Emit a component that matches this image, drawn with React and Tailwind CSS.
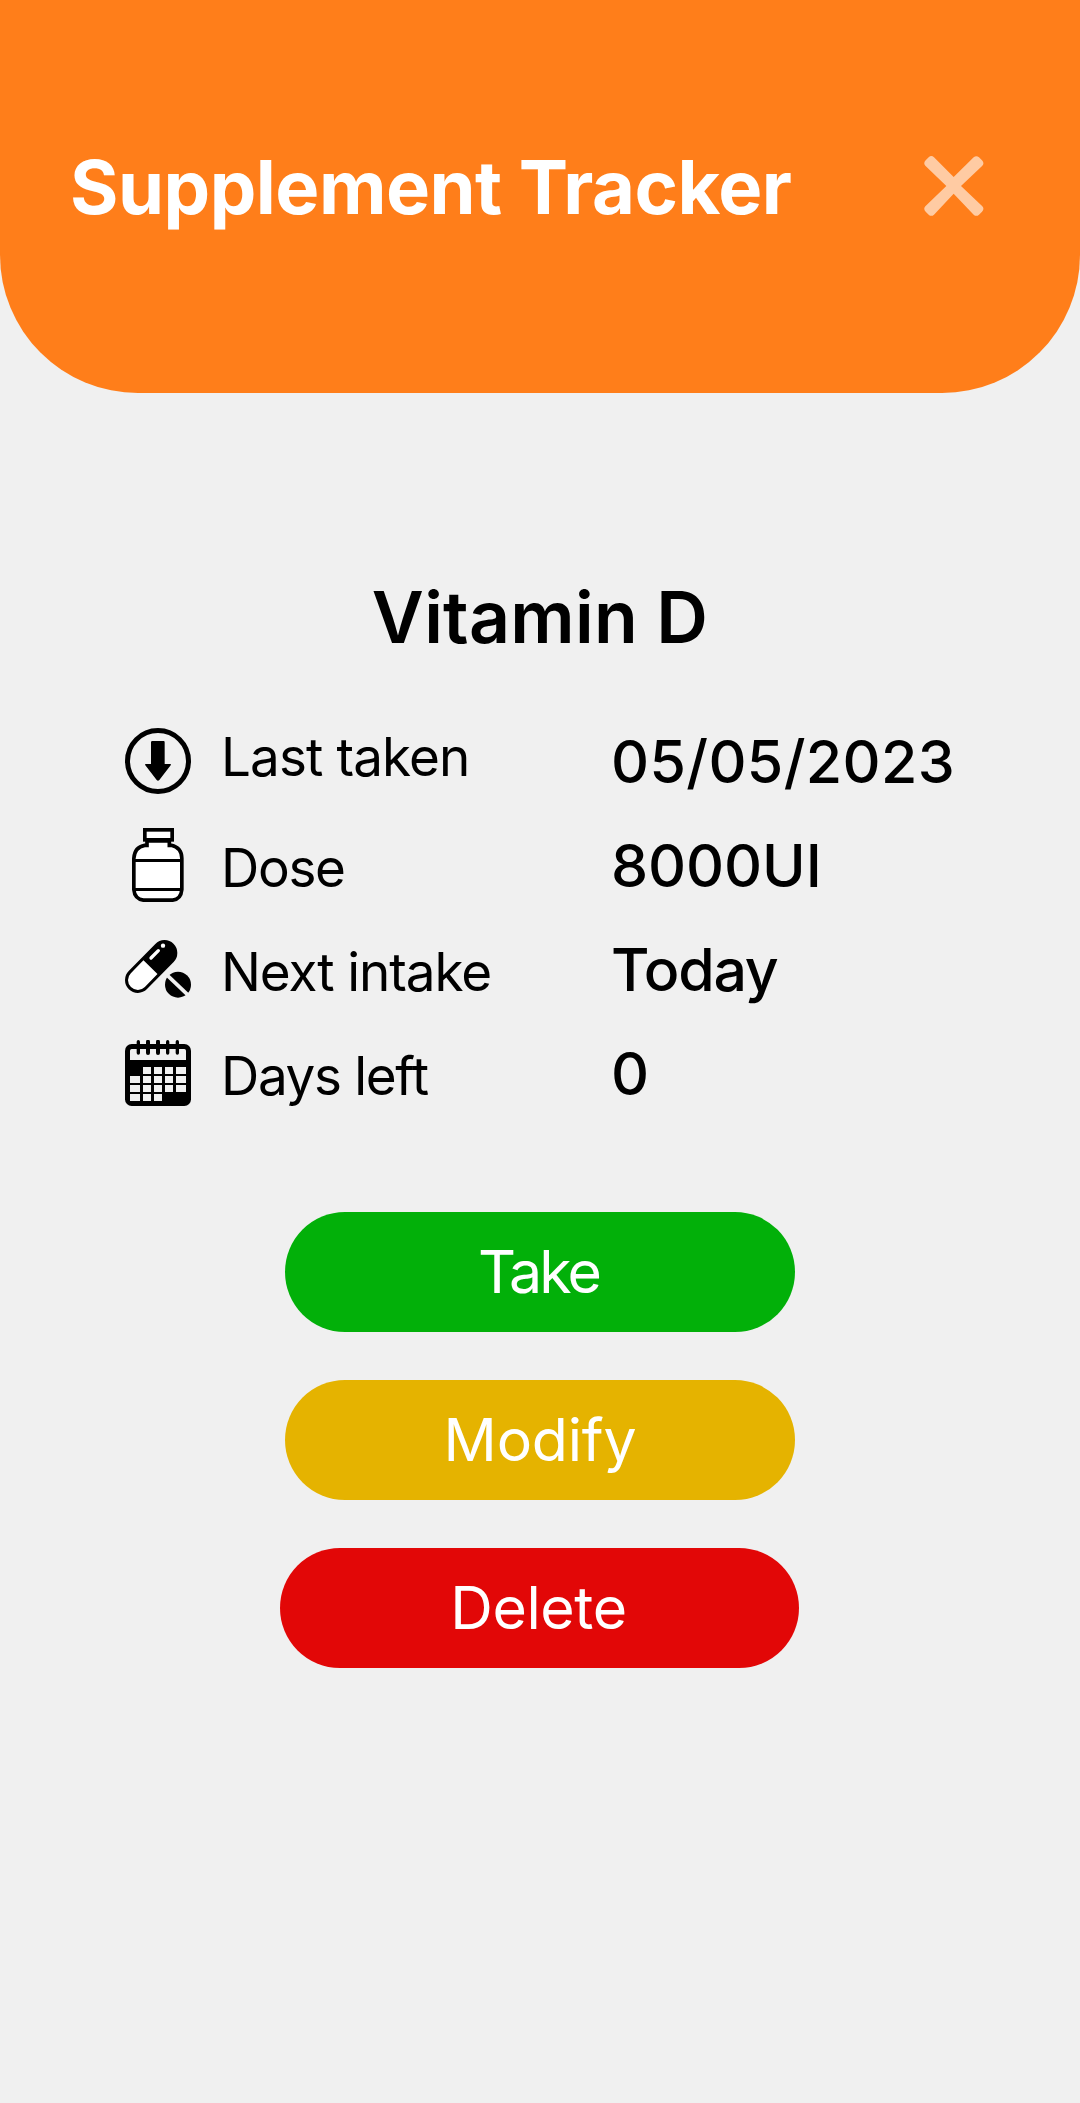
function CloseIcon() {
  return (
    <svg viewBox="103 78 180 180" className="size-[60px]" aria-hidden="true">
      <path
        fill="#ffcba3"
        d="M125 78 Q129 78 133 82 L192 141 L252 82 Q260 75 268 82 L277 91 Q285 99 278 107 L214 168 L278 229 Q285 237 277 245 L268 254 Q260 261 252 254 L192 191 L133 254 Q125 261 117 254 L108 245 Q100 237 107 229 L170 168 L107 107 Q100 99 108 91 L117 82 Q121 78 125 78 Z"
      />
    </svg>
  );
}

function ArrowDownCircleIcon() {
  return (
    <svg viewBox="45 39 198 198" className="h-[66px] w-[66px]" aria-hidden="true">
      <circle cx="144" cy="138" r="91.5" fill="none" stroke="#000" strokeWidth="15" />
      <path
        d="M127 78 H161 Q164 78 164 82 V147 H181 Q184 148 182 151 L148 195 Q144 200 140 195 L106 151 Q104 148 107 147 H123 V82 Q123 78 127 78 Z"
        fill="#000"
      />
    </svg>
  );
}

function BottleIcon() {
  return (
    <svg viewBox="45 39 198 222" className="h-[74px] w-[66px]" aria-hidden="true">
      <path
        d="M111 78 H178 V91 H184 Q215 98 215.500 130 V224 Q213 253 188 255.500 H100 Q74 252 71.500 224 V130 Q74 96 104 91 H111 Z"
        fill="#fff"
        stroke="#000"
        strokeWidth="11"
      />
      <rect x="104.500" y="44.500" width="82" height="30" fill="#fff" stroke="#000" strokeWidth="11" />
      <path d="M72 136.500 H215 M72 223.500 H215" stroke="#000" strokeWidth="9" />
    </svg>
  );
}

function PillsIcon() {
  return (
    <svg viewBox="45 45 198 174" className="h-[58px] w-[66px]" aria-hidden="true">
      <g transform="translate(123.500 124.500) rotate(-45.500)">
        <rect x="-95.500" y="-38.500" width="191" height="77" rx="38.500" fill="#000" />
        <path d="M-3 -29.500 H-57 A29.500 29.500 0 0 0 -57 29.500 H-3 Z" fill="#fff" />
      </g>
      <path d="M123 99 L145 77" stroke="#fff" strokeWidth="10" strokeLinecap="round" />
      <circle cx="159" cy="62" r="6.500" fill="#fff" />
      <circle cx="204" cy="179" r="39" fill="#000" />
      <path d="M172 151 L235 211" stroke="#f0f0f0" strokeWidth="11" />
    </svg>
  );
}

const CALENDAR_CELLS = [
  [99, 126, 24], [132, 126, 24], [165, 126, 24], [198, 126, 30],
  [60, 153, 30], [99, 153, 24], [132, 153, 24], [165, 153, 24], [198, 153, 30],
  [60, 180, 30], [99, 180, 24], [132, 180, 24], [165, 180, 24], [198, 180, 30],
  [60, 207, 30], [99, 207, 24], [132, 207, 24],
];

function CalendarIcon() {
  return (
    <svg viewBox="45 45 198 198" className="h-[66px] w-[66px]" aria-hidden="true">
      <rect x="45" y="57" width="198" height="186" rx="20" fill="#000" />
      <path d="M60 105 V77 Q60 72 65 72 H223 Q228 72 228 77 V105 Z" fill="#f0f0f0" />
      {[85, 114, 144, 173, 202].map((x) => (
        <path
          key={x}
          d={`M${x} 50 V84`}
          stroke="#000"
          strokeWidth={x > 100 && x < 160 ? 12 : 10}
          strokeLinecap="round"
        />
      ))}
      {CALENDAR_CELLS.map(([x, y, w]) => (
        <rect key={`${x}-${y}`} x={x} y={y} width={w} height="21" fill="#f0f0f0" />
      ))}
    </svg>
  );
}

const DETAILS = [
  {
    icon: <ArrowDownCircleIcon />,
    label: "Last taken",
    value: "05/05/2023",
    labelClass: "pb-[8px] tracking-[-0.9px]",
    valueClass: "tracking-[0.35px]",
  },
  {
    icon: <BottleIcon />,
    label: "Dose",
    value: "8000UI",
    labelClass: "pt-[5px] tracking-[-1.3px]",
    valueClass: "tracking-[-0.07px]",
  },
  {
    icon: <PillsIcon />,
    label: "Next intake",
    value: "Today",
    labelClass: "pt-[5px] tracking-[-1.1px]",
    valueClass: "tracking-[-1.2px]",
  },
  {
    icon: <CalendarIcon />,
    label: "Days left",
    value: "0",
    labelClass: "pt-[5px] tracking-[-1.35px]",
    valueClass: "",
  },
];

const ACTIONS = [
  { label: "Take", className: "w-[510px] bg-[#02b009] pr-[3px] tracking-[-2.8px]" },
  { label: "Modify", className: "w-[510px] bg-[#e5b300] tracking-[-0.2px]" },
  { label: "Delete", className: "mr-px w-[519px] bg-[#e20707] pr-[2px] tracking-[-0.4px]" },
];

export default function App() {
  return (
    <div className="flex min-h-screen flex-col bg-[#f0f0f0] font-['Inter',sans-serif] text-black">
      <header className="flex h-[393px] items-start justify-between rounded-b-[138px] bg-[#ff7e1a] pr-[96px] pl-[70px] pt-[137px]">
        <h1 className="text-[74px] leading-[100px] font-bold tracking-[-0.51px] whitespace-nowrap text-white">
          Supplement Tracker
        </h1>
        <button type="button" aria-label="Close" className="mt-[19px]">
          <CloseIcon />
        </button>
      </header>

      <main className="flex flex-col items-center">
        <h2 className="mt-[184px] text-[71.5px] leading-[80px] font-semibold tracking-[0.27px]">
          Vitamin D
        </h2>

        <div className="mt-[52px] flex w-full flex-col pl-[125px]">
          {DETAILS.map((row) => (
            <div key={row.label} className="flex h-[104px] items-center whitespace-nowrap">
              <div className="flex w-[96px] shrink-0 items-center">{row.icon}</div>
              <div className={`w-[390px] shrink-0 text-[53px] leading-[64px] ${row.labelClass}`}>
                {row.label}
              </div>
              <div className={`pt-[2px] text-[59px] leading-[70px] font-medium ${row.valueClass}`}>
                {row.value}
              </div>
            </div>
          ))}
        </div>

        <div className="mt-[87px] flex flex-col items-center gap-12">
          {ACTIONS.map((action) => (
            <button
              key={action.label}
              type="button"
              className={`flex h-[120px] items-center justify-center rounded-full pb-[2px] text-[59px] leading-none text-white ${action.className}`}
            >
              {action.label}
            </button>
          ))}
        </div>
      </main>
    </div>
  );
}
